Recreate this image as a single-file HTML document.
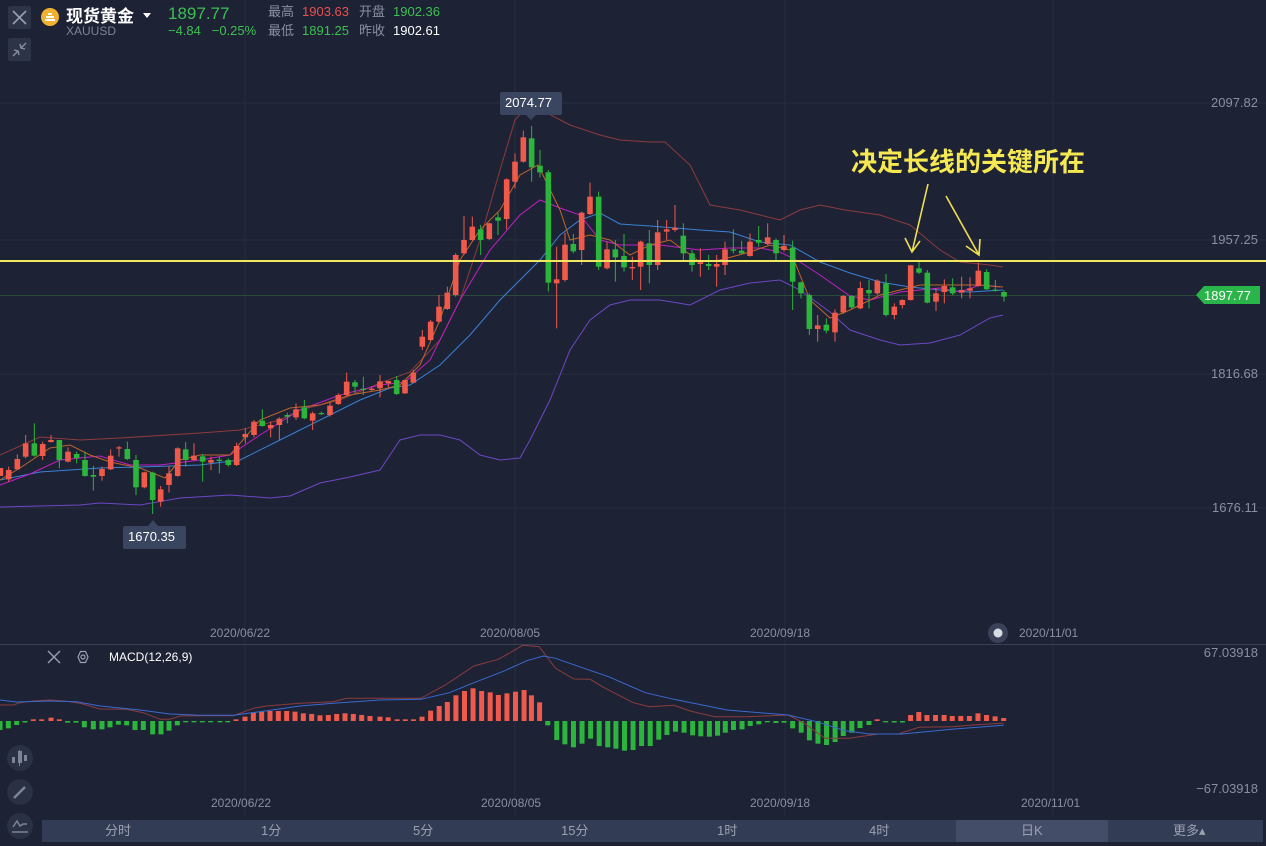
<!DOCTYPE html>
<html><head><meta charset="utf-8">
<style>
html,body{margin:0;padding:0;background:#1d2235;width:1266px;height:846px;overflow:hidden;font-family:"Liberation Sans","Noto Sans CJK SC",sans-serif;}
svg{position:absolute;left:0;top:0}
.t{position:absolute;white-space:nowrap;line-height:1}
</style></head>
<body>
<svg id="s" width="1266" height="846" xmlns="http://www.w3.org/2000/svg">
<rect width="1266" height="846" fill="#1d2235"/>
<g stroke="#262c40" stroke-width="1">
<line x1="245" y1="0" x2="245" y2="815"/><line x1="515" y1="0" x2="515" y2="815"/><line x1="785" y1="0" x2="785" y2="815"/><line x1="1053" y1="0" x2="1053" y2="815"/>
<line x1="0" y1="103" x2="1266" y2="103"/><line x1="0" y1="240" x2="1266" y2="240"/><line x1="0" y1="374" x2="1266" y2="374"/><line x1="0" y1="508" x2="1266" y2="508"/>
</g>
<line x1="0" y1="644.5" x2="1266" y2="644.5" stroke="#3a4158" stroke-width="1"/>
<line x1="0" y1="295.5" x2="1200" y2="295.5" stroke="#2c4a3a" stroke-width="1"/>
<g id="lines" fill="none" stroke-width="1"></g>
<g id="candles"></g>
<g id="macd"></g>
<line x1="0" y1="261" x2="1266" y2="261" stroke="#f0e860" stroke-width="2"/>
<g stroke="#f0e050" stroke-width="1.6" fill="none">
<line x1="928" y1="184" x2="912" y2="252"/><polyline points="905,238 912,252 920,241"/>
<line x1="946" y1="196" x2="979" y2="255"/><polyline points="966,246 979,255 980,239"/>
</g>
<rect x="500" y="92" width="62" height="23" rx="2" fill="#3a4560"/>
<polygon points="526,115 536,115 531,120" fill="#3a4560"/>
<rect x="123" y="526" width="63" height="23" rx="2" fill="#3a4560"/>
<polygon points="148,526 158,526 153,520" fill="#3a4560"/>
<polygon points="1196,295 1204,286 1260,286 1260,304 1204,304" fill="#2ab54a"/>
<rect x="8" y="6" width="23" height="23" rx="2" fill="#2e3448"/>
<path d="M13 11 L26 24 M26 11 L13 24" stroke="#9aa0b0" stroke-width="1.6"/>
<rect x="8" y="38" width="23" height="23" rx="2" fill="#2e3448"/>
<path d="M13 56 L18 51 M14 50 L18 51 L19 55 M26 43 L21 48 M20 44 L21 48 L25 49" stroke="#8a90a0" stroke-width="1.4" fill="none"/>
<circle cx="50" cy="17" r="9" fill="#f0b030"/>
<path d="M45 20h10M46 17h8M48 14h4" stroke="#fff" stroke-width="2"/>
<polygon points="143,13 151,13 147,18" fill="#fff"/>
<line x1="48" y1="651" x2="60" y2="663" stroke="#9aa0b0" stroke-width="1.4"/><line x1="60" y1="651" x2="48" y2="663" stroke="#9aa0b0" stroke-width="1.4"/>
<polygon points="78,657 80.5,651.5 85.5,651.5 88,657 85.5,662.5 80.5,662.5" fill="none" stroke="#9aa0b0" stroke-width="1.2"/>
<circle cx="83" cy="657" r="2" fill="none" stroke="#9aa0b0" stroke-width="1.2"/>
<circle cx="998" cy="633" r="10" fill="#3a4158"/><circle cx="998" cy="633" r="4.5" fill="#d8dce4"/>
<circle cx="20" cy="758" r="13" fill="#2b3145"/><circle cx="20" cy="792" r="13" fill="#2b3145"/><circle cx="20" cy="826" r="13" fill="#2b3145"/>
<g fill="#7d8498"><rect x="12" y="757" width="3" height="6"/><rect x="18" y="751" width="4" height="12"/><rect x="24" y="755" width="3" height="6"/></g>
<line x1="19.5" y1="750" x2="19.5" y2="766" stroke="#7d8498"/>
<line x1="14" y1="798" x2="25" y2="787" stroke="#7d8498" stroke-width="2.5"/>
<polyline points="13,827 17,821 20,826 23,824 27,824" fill="none" stroke="#7d8498" stroke-width="1.5"/>
<line x1="12" y1="832" x2="28" y2="832" stroke="#7d8498" stroke-width="1.5"/>
<rect x="42" y="820" width="1221" height="22" fill="#333c55"/>
<rect x="956" y="820" width="152" height="22" rx="2" fill="#434d68"/>
</svg>

<div class="t" style="left:66px;top:8px;font-size:17px;font-weight:bold;color:#fff">现货黄金</div>
<div class="t" style="left:66px;top:25px;font-size:12px;color:#7d8498">XAUUSD</div>
<div class="t" style="left:168px;top:5px;font-size:17px;color:#3cc050">1897.77</div>
<div class="t" style="left:168px;top:24px;font-size:13px;color:#3cc050">−4.84&nbsp;&nbsp;&nbsp;−0.25%</div>
<div class="t" style="left:268px;top:5px;font-size:13px;color:#8a90a0">最高</div>
<div class="t" style="left:302px;top:5px;font-size:13px;color:#e85050">1903.63</div>
<div class="t" style="left:359px;top:5px;font-size:13px;color:#8a90a0">开盘</div>
<div class="t" style="left:393px;top:5px;font-size:13px;color:#3cc050">1902.36</div>
<div class="t" style="left:268px;top:24px;font-size:13px;color:#8a90a0">最低</div>
<div class="t" style="left:302px;top:24px;font-size:13px;color:#3cc050">1891.25</div>
<div class="t" style="left:359px;top:24px;font-size:13px;color:#8a90a0">昨收</div>
<div class="t" style="left:393px;top:24px;font-size:13px;color:#fff">1902.61</div>

<div class="t" style="left:851px;top:149px;font-size:26px;font-weight:bold;color:#f5e850">决定长线的关键所在</div>
<div class="t" style="left:505px;top:96px;font-size:13px;color:#fff">2074.77</div>
<div class="t" style="left:128px;top:530px;font-size:13px;color:#fff">1670.35</div>
<div class="t" style="left:1204px;top:289px;font-size:13px;color:#fff">1897.77</div>

<div class="t" style="right:8px;top:96px;font-size:13px;color:#8a90a0">2097.82</div>
<div class="t" style="right:8px;top:233px;font-size:13px;color:#8a90a0">1957.25</div>
<div class="t" style="right:8px;top:367px;font-size:13px;color:#8a90a0">1816.68</div>
<div class="t" style="right:8px;top:501px;font-size:13px;color:#8a90a0">1676.11</div>
<div class="t" style="right:8px;top:646px;font-size:13px;color:#8a90a0">67.03918</div>
<div class="t" style="right:8px;top:782px;font-size:13px;color:#8a90a0">−67.03918</div>

<div class="t" style="left:210px;top:627px;font-size:12px;color:#8a90a0">2020/06/22</div>
<div class="t" style="left:480px;top:627px;font-size:12px;color:#8a90a0">2020/08/05</div>
<div class="t" style="left:750px;top:627px;font-size:12px;color:#8a90a0">2020/09/18</div>
<div class="t" style="left:1019px;top:627px;font-size:12px;color:#8a90a0">2020/11/01</div>
<div class="t" style="left:211px;top:797px;font-size:12px;color:#8a90a0">2020/06/22</div>
<div class="t" style="left:481px;top:797px;font-size:12px;color:#8a90a0">2020/08/05</div>
<div class="t" style="left:750px;top:797px;font-size:12px;color:#8a90a0">2020/09/18</div>
<div class="t" style="left:1021px;top:797px;font-size:12px;color:#8a90a0">2020/11/01</div>
<div class="t" style="left:109px;top:651px;font-size:12px;color:#fff">MACD(12,26,9)</div>

<div class="t" style="left:105px;top:824px;font-size:13px;color:#9aa0b0">分时</div>
<div class="t" style="left:261px;top:824px;font-size:13px;color:#9aa0b0">1分</div>
<div class="t" style="left:413px;top:824px;font-size:13px;color:#9aa0b0">5分</div>
<div class="t" style="left:561px;top:824px;font-size:13px;color:#9aa0b0">15分</div>
<div class="t" style="left:717px;top:824px;font-size:13px;color:#9aa0b0">1时</div>
<div class="t" style="left:869px;top:824px;font-size:13px;color:#9aa0b0">4时</div>
<div class="t" style="left:1021px;top:824px;font-size:13px;color:#9aa0b0">日K</div>
<div class="t" style="left:1173px;top:824px;font-size:13px;color:#9aa0b0">更多▴</div>

<script>
var NS="http://www.w3.org/2000/svg";
function el(p,n,a){var e=document.createElementNS(NS,n);for(var k in a)e.setAttribute(k,a[k]);p.appendChild(e);return e;}
var R="#f05a4a",G="#2cb53c";
var regions=[
[0,360,3,3,[[26,R,330,358,320,365],[52,R,297,328,283,330],[77,R,250,290,225,295],[103,G,250,287,190,290],[128,R,252,288,245,300],[153,R,240,246,225,248],[178,G,240,300,240,325],[204,R,275,305,262,307],[230,G,282,294,275,310],[255,G,300,348,275,350],[280,G,345,350,318,392],[306,R,327,348,320,362],[332,R,287,328,268,330],[357,R,262,265,258,290],[382,G,267,297,245,300],[408,G,300,382,285,405],[433,R,337,382,335,385],[458,G,338,420,335,462],[482,R,388,425,378,440],[507,R,340,375,318,398],[533,R,265,348,262,350],[557,G,268,300,246,320],[582,R,287,300,250,302],[608,G,289,305,282,365],[633,R,300,308,290,330],[658,G,299,303,290,340],[685,G,300,315,295,320],[710,R,258,315,248,318],[736,R,222,232,205,250],[762,R,185,225,180,232],[787,G,182,198,148,200],[812,R,195,205,185,232],[838,R,176,195,172,240],[862,G,165,170,158,190],[888,R,148,172,130,180],[913,G,142,175,120,178],[938,R,160,182,155,210],[964,G,159,162,155,165],[990,R,137,165,128,170],[1015,R,105,132,100,135],[1040,R,65,105,38,108],[1065,G,67,80,60,100],[1090,G,86,90,50,105],[1115,R,86,90,80,92],[1140,R,64,85,45,112],[1165,R,63,70,63,82],[1190,G,60,102,48,105],[1215,R,60,100,58,102],[1240,R,38,68,30,70]]],
[400,90,3,3,[[67,R,740,770,720,780],[92,R,695,750,690,752],[117,R,650,695,615,700],[142,R,608,657,590,660],[167,R,495,615,490,620],[192,R,450,490,378,495],[217,R,410,450,380,452],[242,G,418,450,405,495],[268,R,400,447,398,450],[294,G,382,392,368,435],[320,R,268,387,265,418],[345,R,215,275,190,295],[370,R,142,215,122,218],[395,G,145,232,108,275],[420,G,227,247,180,262],[445,G,247,578,240,605],[470,R,568,580,470,715],[495,R,464,570,428,575],[520,G,462,484,432,490],[545,R,368,480,365,525],[570,R,320,372,278,375],[596,G,320,530,305,540],[621,R,478,535,455,538],[646,G,478,502,450,575],[672,G,498,532,432,545],[697,R,531,535,500,570],[722,R,455,530,452,600],[748,G,460,525,420,580],[773,R,427,525,390,540],[800,R,418,425,390,450],[825,R,413,420,345,425],[850,G,437,490,400,515],[876,G,490,525,480,545],[901,R,517,522,475,560],[926,G,522,528,495,540],[950,R,522,530,495,590]]],
[700,180,3,3,[[75,R,208,255,185,285],[100,G,208,212,148,220],[125,G,212,220,183,222],[150,R,185,228,160,230],[176,G,180,188,138,200],[203,R,172,192,130,195],[228,G,180,220,175,240],[252,R,198,210,165,215],[278,G,203,305,182,390],[303,G,307,340,305,355],[328,G,345,447,340,465],[353,R,436,447,405,485],[379,G,434,452,415,460],[405,R,398,457,388,485],[430,R,348,397,345,402],[455,G,348,382,345,388],[481,R,324,385,305,388],[507,G,330,340,300,385],[532,R,302,340,298,345],[558,G,310,405,282,410],[583,R,380,405,370,418],[607,R,360,375,358,385],[632,R,256,360,255,362],[657,G,265,278,245,282],[682,G,278,368,270,370],[708,R,340,365,325,393],[733,R,318,336,298,370],[758,G,322,340,295,345],[785,R,330,338,290,355],[810,R,325,332,292,355],[835,R,272,318,248,320],[860,G,276,328,268,330],[886,G,329,332,300,335],[912,G,336,350,330,365]]]
];
var cg=document.getElementById("candles");
regions.forEach(function(r){r[4].forEach(function(c){
 var x=r[0]+c[0]/r[2];
 el(cg,"line",{x1:x,x2:x,y1:r[1]+c[4]/3,y2:r[1]+c[5]/3,stroke:c[1],"stroke-width":1});
 var t=r[1]+c[2]/3,b=r[1]+c[3]/3;if(b-t<1.2)b=t+1.2;
 el(cg,"rect",{x:x-2.8,y:t,width:5.6,height:b-t,fill:c[1]});
});});
el(cg,"rect",{x:-2.4,y:468,width:5.6,height:8,fill:R});
var lg=document.getElementById("lines");
function pl(pts,col,g,w){el(g||lg,"polyline",{points:pts,stroke:col,fill:"none","stroke-width":w||1});}
pl("0,455 40,437 80,440 120,438 200,433 240,430 280,420 300,410 340,400 380,383 410,372 440,340 460,300 480,240 500,170 515,120 530,103 545,112 570,125 600,135 620,140 650,142 665,142 690,165 710,205 740,210 780,220 800,210 820,205 845,210 880,215 910,225 940,250 960,262 990,265 1003,267","#8c3c3c");
pl("0,507 40,506 80,505 100,503 140,505 180,498 230,495 270,498 290,496 320,483 350,477 380,470 400,440 420,435 440,435 460,440 480,455 500,460 520,458 530,440 550,400 570,350 590,320 610,305 630,300 660,300 690,305 720,290 750,283 780,280 800,290 830,312 850,330 880,340 900,345 930,343 960,335 990,318 1003,315","#6d48c4");
pl("0,480 40,472 100,468 140,467 200,465 240,460 280,440 320,420 360,400 390,388 410,385 440,365 470,335 500,300 520,280 540,260 560,235 580,220 600,213 620,224 650,226 700,230 730,232 760,242 790,245 820,262 850,273 880,282 910,287 940,290 970,292 1003,290","#3a82d6");
pl("0,485 30,474 60,460 100,456 130,465 160,465 200,460 230,455 260,435 300,410 340,395 380,385 405,382 430,360 460,300 490,250 520,215 540,200 560,208 580,215 600,240 620,245 660,245 700,250 730,248 760,248 780,252 800,262 820,275 850,296 870,300 900,292 920,290 940,288 960,292 980,285 1000,287","#c020c0");
pl("0,480 20,468 50,448 70,445 90,455 110,462 140,468 165,478 180,460 200,455 230,455 260,420 290,408 320,405 350,395 380,390 400,385 420,365 440,320 460,260 480,230 500,210 520,175 538,165 560,210 570,240 590,235 610,240 630,255 650,245 670,240 700,262 720,260 750,252 770,245 790,250 810,300 830,318 850,310 880,295 900,290 920,285 950,285 980,285 1003,287","#c0642a");
var mg=document.getElementById("macd");
var left=[[0,270],[25,265],[50,255],[75,246],[100,238],[125,238],[153,233],[178,238],[203,248],[228,248],[253,262],[280,268],[306,268],[330,262],[355,254],[380,256],[405,270],[430,270],[458,283],[483,283],[507,272],[532,256],[557,247],[582,247],[607,247],[632,247],[660,247],[683,247],[708,238],[735,230],[760,218],[785,215],[810,213],[835,213],[860,213],[885,215],[910,220],[935,222],[960,226],[985,225],[1010,222],[1035,220],[1060,222],[1085,225],[1110,228]];
var right=[[0,230],[20,232],[42,238],[62,238],[82,238],[103,230],[124,212],[145,198],[165,186],[186,166],[207,153],[228,145],[249,153],[270,157],[290,165],[311,160],[332,155],[353,150],[371,166],[391,187],[411,256],[433,300],[453,313],[474,322],[495,311],[516,296],[537,318],[558,322],[578,326],[599,332],[620,330],[641,318],[662,318],[683,299],[703,285],[724,275],[745,278],[766,286],[786,289],[807,290],[827,287],[846,278],[866,270],[887,268],[907,258],[928,253],[949,247],[970,249],[990,248],[1011,265],[1032,278],[1052,301],[1073,311],[1094,315],[1115,306],[1135,288],[1156,278],[1176,264],[1198,255],[1218,238],[1239,247],[1260,246],[1280,246],[1300,225],[1320,216],[1340,225],[1361,225],[1382,225],[1402,228],[1423,228],[1444,228],[1465,220],[1486,225],[1507,229],[1528,234]];
function bar(x,zy){var h=(243-zy)/3;var y0=721;var c=h>0?R:G;
 if(Math.abs(h)<1.3)h=h>=0?1.5:-1.5;
 el(mg,"rect",{x:x-2.5,y:h>0?y0-h:y0,width:5,height:Math.abs(h),fill:c});}
left.forEach(function(b){bar(b[0]/3,b[1]);});
right.forEach(function(b){bar(380+b[0]/2.45,b[1]);});
function cv(pts,x0,sx){return pts.map(function(p){return (x0+p[0]/sx).toFixed(1)+","+(640+p[1]/3).toFixed(1);}).join(" ");}
pl(cv([[0,195],[40,195],[60,188],[100,183],[150,180],[200,184],[240,190],[300,207],[380,208],[430,218],[480,238],[510,238],[540,228],[600,227],[700,227],[760,205],[800,198],[900,190],[1000,185],[1040,175],[1140,175]],0,3)+" "+cv([[0,175],[100,175],[160,135],[230,78],[290,58],[350,16],[390,20],[430,85],[475,117],[515,118],[545,140],[620,188],[660,200],[720,196],[760,213],[820,230],[900,230],[1000,225],[1040,250],[1090,295],[1150,295],[1220,282],[1270,282],[1320,262],[1400,260],[1460,254],[1528,250]],380,2.45),"#8c3c3c",mg);
pl(cv([[0,180],[50,186],[150,183],[230,185],[300,198],[420,210],[510,222],[600,226],[700,226],[800,212],[900,198],[1000,190],[1140,180]],0,3)+" "+cv([[0,180],[100,178],[170,158],[230,128],[300,95],[360,62],[400,48],[430,55],[500,85],[560,110],[650,158],[720,178],[850,210],[1000,225],[1070,245],[1140,272],[1200,282],[1280,282],[1400,268],[1528,256]],380,2.45),"#3a6ad0",mg);
</script>
</body></html>
